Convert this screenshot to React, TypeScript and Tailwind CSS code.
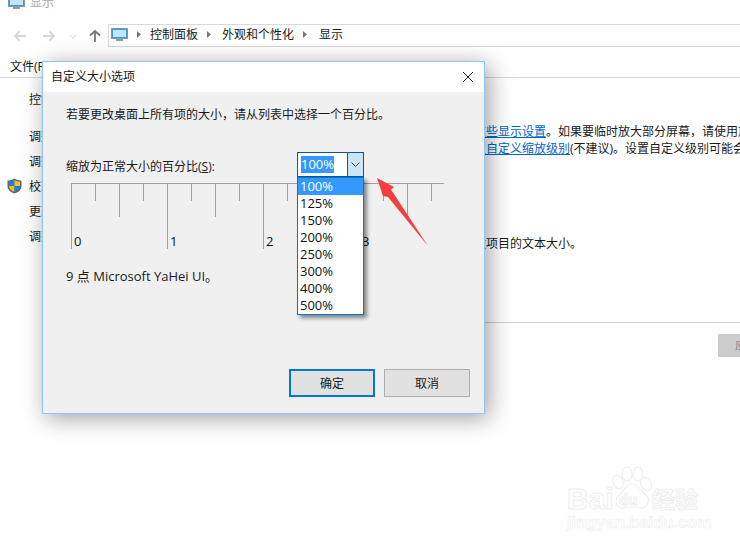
const LIST_ITEMS = ["100%", "125%", "150%", "200%", "250%", "300%", "400%", "500%"];

// ruler ticks, offset from the ruler's left edge (every 24px)
const TICKS = Array.from({ length: 16 }, (_, i) => ({
  x: i * 24 + 0.5,
  end: i % 4 === 0 ? 66 : i % 2 === 0 ? 34 : 18,
}));

function MonitorIcon() {
  return (
    <svg width="17" height="14" viewBox="0 0 17 14">
      <rect x="0.5" y="0.5" width="16" height="10" fill="#3f9bd8" stroke="#7f98a8" />
      <rect x="2" y="2" width="13" height="7" fill="#bfe6fb" />
      <rect x="5" y="11" width="7" height="2" fill="#8aa0ad" />
    </svg>
  );
}

function Ruler() {
  return (
    <svg width="374" height="67" className="ml-[5px] mt-[6px] block">
      <line x1="0" y1="0.5" x2="373" y2="0.5" stroke="#a0a0a0" />
      {TICKS.map((t) => (
        <line key={t.x} x1={t.x} y1="1" x2={t.x} y2={t.end} stroke="#a0a0a0" />
      ))}
      {[0, 1, 2, 3].map((n) => (
        <text key={n} x={n * 96 + 3} y="63" fontSize="13" fill="#111">
          {n}
        </text>
      ))}
    </svg>
  );
}

function Combo() {
  return (
    <div className="relative">
      <div className="flex h-[25px] w-[67px] border border-[#005a9e] bg-white">
        <div className="flex flex-1 items-center pl-[3px]">
          <span className="bg-[#3399ff] text-[13px] leading-[17px] text-white">100%</span>
        </div>
        <div className="flex w-[16px] items-center justify-center border-l border-[#005a9e] bg-[#cce4f7]">
          <svg width="9" height="6" viewBox="0 0 9 6" fill="none" stroke="#444">
            <path d="M0.5 0.5 L4.5 4.5 L8.5 0.5" />
          </svg>
        </div>
      </div>
      <ul className="absolute left-0 top-[25px] z-10 w-[67px] border border-[#0078d7] bg-white shadow-[3px_3px_4px_rgba(0,0,0,0.45)]">
        {LIST_ITEMS.map((item, i) => (
          <li
            key={item}
            className={`h-[17px] pl-[2px] text-[13px] leading-[17px] ${
              i === 0 ? "bg-[#3399ff] text-white" : "text-[#111]"
            }`}
          >
            {item}
          </li>
        ))}
      </ul>
    </div>
  );
}

function ScaleDialog() {
  return (
    <div className="absolute left-[42px] top-[61px] z-10 flex h-[353px] w-[443px] flex-col border border-[#8fc6f4] bg-[#f0f0f0] shadow-[4px_4px_22px_rgba(0,0,0,0.38)]">
      <div className="flex h-[30px] items-center justify-between bg-white pl-[8px] pr-[11px]">
        <span>自定义大小选项</span>
        <svg width="10" height="10" viewBox="0 0 10 10" stroke="#222">
          <path d="M0 0 L10 10 M10 0 L0 10" />
        </svg>
      </div>
      <div className="flex flex-1 flex-col pl-[23px] pr-[14px] pb-[16px]">
        <p className="mt-[15px] h-[16px]">若要更改桌面上所有项的大小&#xFF0C;请从列表中选择一个百分比。</p>
        <div className="mt-[29px] flex">
          <span className="mt-[7px] w-[231px]">
            缩放为正常大小的百分比(<span className="underline">S</span>):
          </span>
          <Combo />
        </div>
        <Ruler />
        <p className="mt-[18px] h-[16px] text-[13px] leading-[16px]">9 点 Microsoft YaHei UI。</p>
        <div className="mt-auto flex justify-end gap-[9px]">
          <button className="h-[28px] w-[86px] border-2 border-[#0078d7] bg-[#e1e1e1] pt-px">确定</button>
          <button className="h-[28px] w-[86px] border border-[#adadad] bg-[#e1e1e1] pt-px">取消</button>
        </div>
      </div>
    </div>
  );
}

function Watermark() {
  return (
    <div className="absolute left-[567px] top-[466px] h-[70px] w-[134px] text-transparent">
      <span className="absolute left-0 top-[18px] font-['Liberation_Sans',sans-serif] text-[30px] font-bold leading-[30px] [-webkit-text-stroke:1px_#efefef]">
        Bai
      </span>
      <svg width="42" height="46" viewBox="0 0 42 46" className="absolute left-[44px] top-0" fill="#fff" stroke="#efefef" strokeWidth="1.2">
        <ellipse cx="7" cy="16" rx="5" ry="7" transform="rotate(-20 7 16)" />
        <ellipse cx="16" cy="8" rx="5" ry="7" />
        <ellipse cx="27" cy="8" rx="5" ry="7" />
        <ellipse cx="35" cy="18" rx="5" ry="7" transform="rotate(-30 35 18)" />
        <path d="M21 18 C27 18 30 25 35 29 C40 34 36 43 29 42 C25 41 17 41 13 42 C6 43 2 35 8 29 C13 25 15 18 21 18 Z" />
      </svg>
      <span className="absolute left-[52px] top-[26px] font-['Liberation_Sans',sans-serif] text-[15px] font-bold leading-[16px] [-webkit-text-stroke:1px_#efefef]">
        du
      </span>
      <span className="absolute left-[85px] top-[21px] text-[23px] font-bold leading-[24px] [-webkit-text-stroke:1px_#efefef]">
        经验
      </span>
      <span className="absolute left-0 top-[47px] whitespace-nowrap font-['Liberation_Sans',sans-serif] text-[16.5px] font-bold leading-[18px] [-webkit-text-stroke:0.7px_#efefef]">
        jingyan.baidu.com
      </span>
    </div>
  );
}

export default function App() {
  return (
    <div className="relative h-[547px] w-[740px] overflow-hidden bg-white font-['Open_Sans','Noto_Sans_CJK_SC',sans-serif] text-[12px] leading-[16px] text-[#1a1a1a]">
      {/* title bar, cut off by the top of the page */}
      <div className="-mt-[7px] flex h-[19px] items-center gap-[5px] pl-[8px] text-[#a8a8a8]">
        <MonitorIcon />
        <span>显示</span>
      </div>

      {/* nav + address bar */}
      <div className="mt-[12px] flex h-[23px]">
        <div className="flex w-[108px] shrink-0 items-center pl-[13px]">
          <svg width="92" height="14" viewBox="0 0 92 14" fill="none">
            <path d="M13 7 H2 M6.5 2.5 L2 7 L6.5 11.5" stroke="#d8d8d8" strokeWidth="2" />
            <path d="M30 7 H41 M36.5 2.5 L41 7 L36.5 11.5" stroke="#d8d8d8" strokeWidth="2" />
            <path d="M57 6 L60 9 L63 6" stroke="#d8d8d8" />
            <path d="M82 13 V2 M77 6.5 L82 2 L87 6.5" stroke="#777" strokeWidth="1.8" />
          </svg>
        </div>
        <div className="flex flex-1 items-center border-y border-l border-[#d9d9d9] pb-[2px] pl-[2px]">
          <MonitorIcon />
          <svg width="5" height="7" viewBox="0 0 5 7" className="ml-[9px]" fill="#777"><path d="M0 0 L4 3.5 L0 7 Z" /></svg>
          <span className="ml-[8px]">控制面板</span>
          <svg width="5" height="7" viewBox="0 0 5 7" className="ml-[9px]" fill="#777"><path d="M0 0 L4 3.5 L0 7 Z" /></svg>
          <span className="ml-[10px]">外观和个性化</span>
          <svg width="5" height="7" viewBox="0 0 5 7" className="ml-[9px]" fill="#777"><path d="M0 0 L4 3.5 L0 7 Z" /></svg>
          <span className="ml-[11px]">显示</span>
        </div>
      </div>

      {/* menu */}
      <div className="h-[31px] border-b border-[#d9d9d9] pl-[10px] pt-[12px]">文件(F)</div>

      {/* page behind the dialog */}
      <div className="flex">
        <div className="relative w-[222px] shrink-0 pl-[29px] pt-[14px]">
          <div className="h-[16px]">控制面板主页</div>
          <div className="mt-[16px]">
            {["调整分辨率", "调整亮度", "校准颜色", "更改显示器设置", "调整 ClearType 文本"].map((t) => (
              <div key={t} className="h-[25px] leading-[25px]">
                {t}
              </div>
            ))}
          </div>
          <svg width="15" height="16" viewBox="0 0 15 16" className="absolute left-[7px] top-[100px]">
            <path d="M7.5 0.5 C10 2 12 2.5 14.5 2.5 V8 C14.5 12 11 14.5 7.5 15.5 C4 14.5 0.5 12 0.5 8 V2.5 C3 2.5 5 2 7.5 0.5 Z" fill="#5b6670" />
            <path d="M7.5 2 V8 H2 V3.8 C4 3.7 6 3 7.5 2 Z" fill="#1f7fd6" />
            <path d="M7.5 2 C9 3 11 3.7 13 3.8 V8 H7.5 Z" fill="#f3bd2e" />
            <path d="M2 8 H7.5 V14 C4.5 13 2 11 2 8 Z" fill="#f3bd2e" />
            <path d="M7.5 8 H13 C13 11 10.5 13 7.5 14 Z" fill="#1f7fd6" />
          </svg>
        </div>
        <div className="min-w-0 flex-1 overflow-hidden pt-[45px] whitespace-nowrap">
          <div className="h-[17px] leading-[17px]">
            若要同时更改所有显示器的大小&#xFF0C;请选择并使用<span className="text-[#0066cc] underline">这些显示设置</span>。如果要临时放大部分屏幕&#xFF0C;请使用放大镜。
          </div>
          <div className="h-[17px] leading-[17px]">
            如果这两种方式都不能进行所需的更改&#xFF0C;可以<span className="text-[#0066cc] underline">设置自定义缩放级别</span>(不建议)。设置自定义级别可能会导致
          </div>
          <div className="mt-[78px] h-[17px] pl-[228px] leading-[17px]">仅更改项目的文本大小。</div>
          <div className="mt-[70px] flex justify-end border-t border-[#d0d0d0] pt-[11px]">
            <div className="h-[23px] w-[22px] overflow-hidden whitespace-nowrap bg-[#cccccc] pl-[17px] leading-[23px] text-[#8a8a8a]">
              应用
            </div>
          </div>
        </div>
      </div>

      <ScaleDialog />

      {/* red annotation arrow */}
      <svg width="60" height="75" viewBox="0 0 60 75" className="absolute left-[374px] top-[175px] z-20">
        <path d="M3 3 L20 12 L17 14.500 L54 71 L14 22 L9 21 Z" fill="#f2403f" />
      </svg>

      <Watermark />
    </div>
  );
}
